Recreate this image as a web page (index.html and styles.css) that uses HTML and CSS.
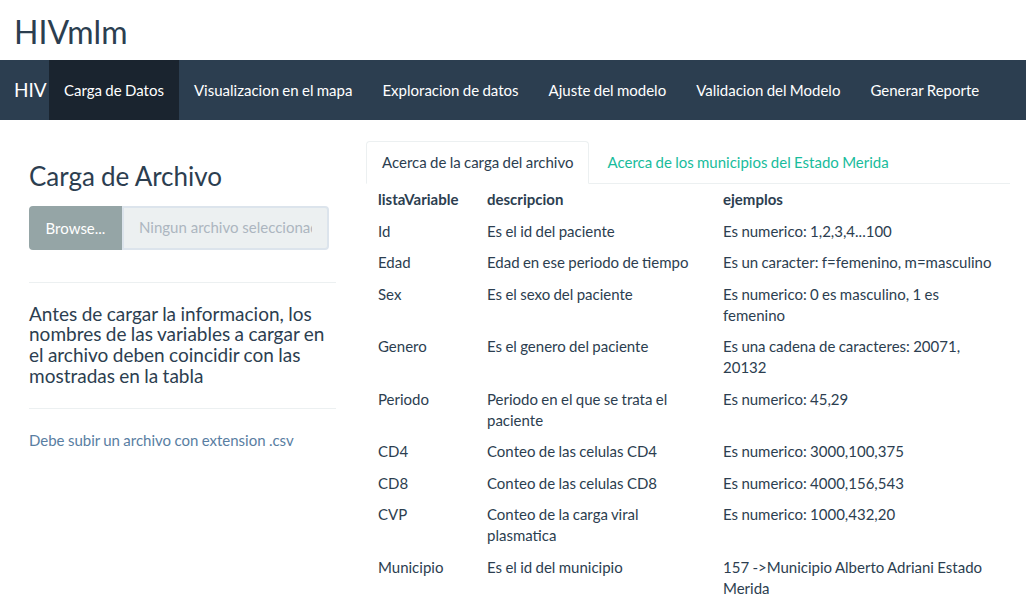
FILE: index.html
```html
<!DOCTYPE html>
<html lang="es">
<head>
<meta charset="utf-8">
<title>HIVmlm</title>
<link rel="stylesheet" href="styles.css">
</head>
<body>
<header class="page-title"><h2>HIVmlm</h2></header>
<nav class="navbar">
  <span class="brand">HIV</span>
  <ul class="nav">
    <li class="active"><a>Carga de Datos</a></li>
    <li><a>Visualizacion en el mapa</a></li>
    <li><a>Exploracion de datos</a></li>
    <li><a>Ajuste del modelo</a></li>
    <li><a>Validacion del Modelo</a></li>
    <li><a>Generar Reporte</a></li>
  </ul>
</nav>
<main class="layout">
  <section class="side">
    <h3 class="side-title">Carga de Archivo</h3>
    <div class="file-input">
      <span class="browse">Browse...</span>
      <input class="file-name" type="text" readonly placeholder="Ningun archivo seleccionado">
    </div>
    <hr class="rule first">
    <h4 class="note">Antes de cargar la informacion, los nombres de las variables a cargar en el archivo deben coincidir con las mostradas en la tabla</h4>
    <hr class="rule">
    <p class="help">Debe subir un archivo con extension .csv</p>
  </section>
  <section class="content">
    <ul class="tabs">
      <li class="tab active"><a>Acerca de la carga del archivo</a></li>
      <li class="tab"><a>Acerca de los municipios del Estado Merida</a></li>
    </ul>
    <table class="data">
      <colgroup><col class="c1"><col class="c2"><col class="c3"></colgroup>
      <thead>
        <tr><th>listaVariable</th><th>descripcion</th><th>ejemplos</th></tr>
      </thead>
      <tbody>
        <tr><td>Id</td><td>Es el id del paciente</td><td>Es numerico: 1,2,3,4...100</td></tr>
        <tr><td>Edad</td><td>Edad en ese periodo de tiempo</td><td>Es un caracter: f=femenino, m=masculino</td></tr>
        <tr><td>Sex</td><td>Es el sexo del paciente</td><td>Es numerico: 0 es masculino, 1 es femenino</td></tr>
        <tr><td>Genero</td><td>Es el genero del paciente</td><td>Es una cadena de caracteres: 20071, 20132</td></tr>
        <tr><td>Periodo</td><td>Periodo en el que se trata el paciente</td><td>Es numerico: 45,29</td></tr>
        <tr><td>CD4</td><td>Conteo de las celulas CD4</td><td>Es numerico: 3000,100,375</td></tr>
        <tr><td>CD8</td><td>Conteo de las celulas CD8</td><td>Es numerico: 4000,156,543</td></tr>
        <tr><td>CVP</td><td>Conteo de la carga viral plasmatica</td><td>Es numerico: 1000,432,20</td></tr>
        <tr><td>Municipio</td><td>Es el id del municipio</td><td>157 -&gt;Municipio Alberto Adriani Estado Merida</td></tr>
      </tbody>
    </table>
  </section>
</main>
</body>
</html>
```

FILE: styles.css
```css
* { box-sizing: border-box; }
html, body { margin: 0; padding: 0; }
body {
  font-family: Lato, "Open Sans", "Liberation Sans", sans-serif;
  font-size: 15px;
  line-height: 1.42857;
  color: #2c3e50;
  background: #fff;
  overflow: hidden;
  word-spacing: -0.5px;
}

.page-title { height: 60px; padding: 14px 0 0 14px; }
.page-title h2 { margin: 0; font-size: 32px; line-height: 1.1; font-weight: 400; }

.navbar { display: flex; height: 60px; background: #2c3e50; }
.brand {
  width: 49px;
  padding-left: 14px;
  font-size: 19px;
  line-height: 60px;
  color: #fff;
}
.nav { display: flex; list-style: none; margin: 0; padding: 0; }
.nav a {
  display: block;
  padding: 19.5px 15px;
  line-height: 21px;
  color: #fff;
}
.nav .active a { background: #1a242f; }

.layout {
  display: grid;
  grid-template-columns: 307px 644px;
  column-gap: 30px;
  padding: 21px 16px 0 29px;
}

.side-title { margin: 21px 0 0; font-size: 26px; line-height: 1.1; font-weight: 400; }
.file-input { display: flex; width: 300px; height: 44px; margin-top: 15px; }
.browse {
  width: 93px;
  background: #95a5a6;
  color: #fff;
  border-radius: 4px 0 0 4px;
  text-align: center;
  line-height: 44px;
}
.file-name {
  flex: 1;
  min-width: 0;
  background: #ecf0f1;
  border: 2px solid #dce4ec;
  border-radius: 0 4px 4px 0;
  padding: 0 15px;
  font: inherit;
  color: #2c3e50;
  outline: none;
}
.file-name::placeholder { color: #acb6c0; opacity: 1; }
.rule { border: 0; border-top: 1px solid #ecf0f1; margin: 21px 0; }
.rule.first { margin-top: 32px; }
.note { margin: 0; font-size: 19px; line-height: 1.1; font-weight: 400; }
.help { margin: 19px 0 0; color: #597ea2; }

.tabs {
  display: flex;
  list-style: none;
  margin: 0;
  padding: 0;
  border-bottom: 1px solid #ecf0f1;
}
.tab { margin-bottom: -1px; margin-right: 2px; }
.tab a {
  display: block;
  padding: 10px 15px;
  line-height: 21px;
  border: 1px solid transparent;
  border-radius: 4px 4px 0 0;
  color: #18bc9c;
}
.tab.active a {
  color: #2c3e50;
  background: #fff;
  border-color: #ecf0f1 #ecf0f1 transparent;
}

.data { width: 100%; border-collapse: collapse; table-layout: fixed; }
.data .c1 { width: 109px; }
.data .c2 { width: 236px; }
.data .c3 { width: 299px; }
.data th, .data td {
  padding: 5px 12px 5.5px;
  line-height: 21px;
  text-align: left;
  vertical-align: top;
}
.data th { font-weight: 700; }
```
